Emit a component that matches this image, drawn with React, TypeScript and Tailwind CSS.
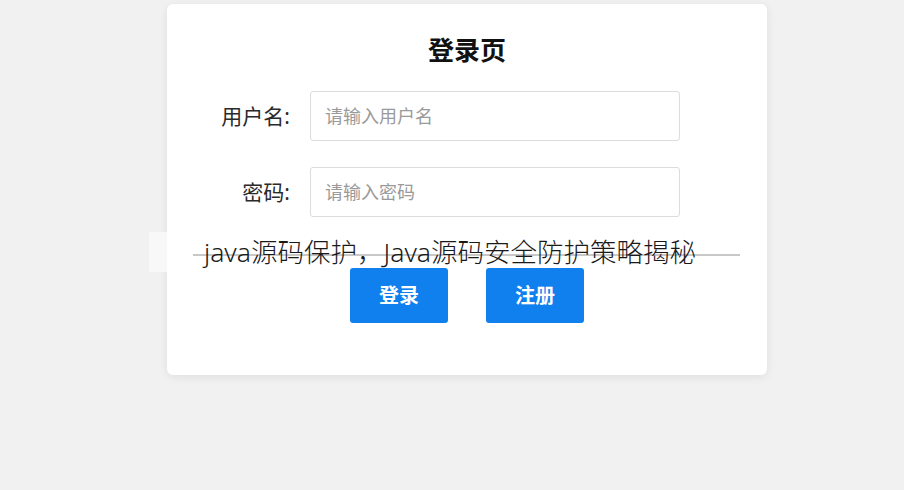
import React from 'react';

const cjk = { fontFamily: '"Noto Sans", "Noto Sans CJK SC", sans-serif' };

const Field: React.FC<{ label: string; placeholder: string; type?: string }> = ({ label, placeholder, type = 'text' }) => (
  <div className="flex items-center">
    <label className="w-[123px] text-right text-[21px] text-[#2a2a2a] leading-none">{label}</label>
    <input
      type={type}
      placeholder={placeholder}
      className="ml-[20px] w-[370px] h-[50px] border border-[#dcdcdc] rounded-[3px] px-[14px] text-[18px] text-[#333] placeholder:text-[#9a9a9a] outline-none bg-white"
    />
  </div>
);

export default function App() {
  return (
    <div className="relative w-[904px] h-[490px] bg-[#f1f1f1] overflow-hidden" style={cjk}>
      <div className="ml-[167px] pt-[4px]">
        <div className="w-[600px] h-[371px] bg-white rounded-[6px] shadow-[0_2px_10px_rgba(0,0,0,0.08)] flex flex-col items-center">
          <h1 className="mt-[30px] text-[26px] font-bold text-[#111] leading-[32px]">登录页</h1>
          <div className="self-start mt-[25px] flex flex-col gap-[26px]">
            <Field label="用户名:" placeholder="请输入用户名" />
            <Field label="密码:" placeholder="请输入密码" type="password" />
          </div>
          <div className="mt-[51px] flex gap-[38px]">
            <button className="w-[98px] h-[55px] rounded-[3px] bg-[#0f80ee] text-white text-[20px] font-semibold">登录</button>
            <button className="w-[98px] h-[55px] rounded-[3px] bg-[#0f80ee] text-white text-[20px] font-semibold">注册</button>
          </div>
        </div>
      </div>

      {/* caption overlay */}
      <div className="absolute left-[149px] top-[232px] w-[18px] h-[40px] bg-[#f8f8f8]" />
      <div className="absolute left-[193px] top-[254px] w-[547px] h-[2px] bg-[#c8c8c8]" />
      <div className="absolute left-0 right-[4px] top-[235px] text-center text-[26.5px] font-light text-[#1a1a1a] leading-[34px]">
        java源码保护，Java源码安全防护策略揭秘
      </div>
    </div>
  );
}
